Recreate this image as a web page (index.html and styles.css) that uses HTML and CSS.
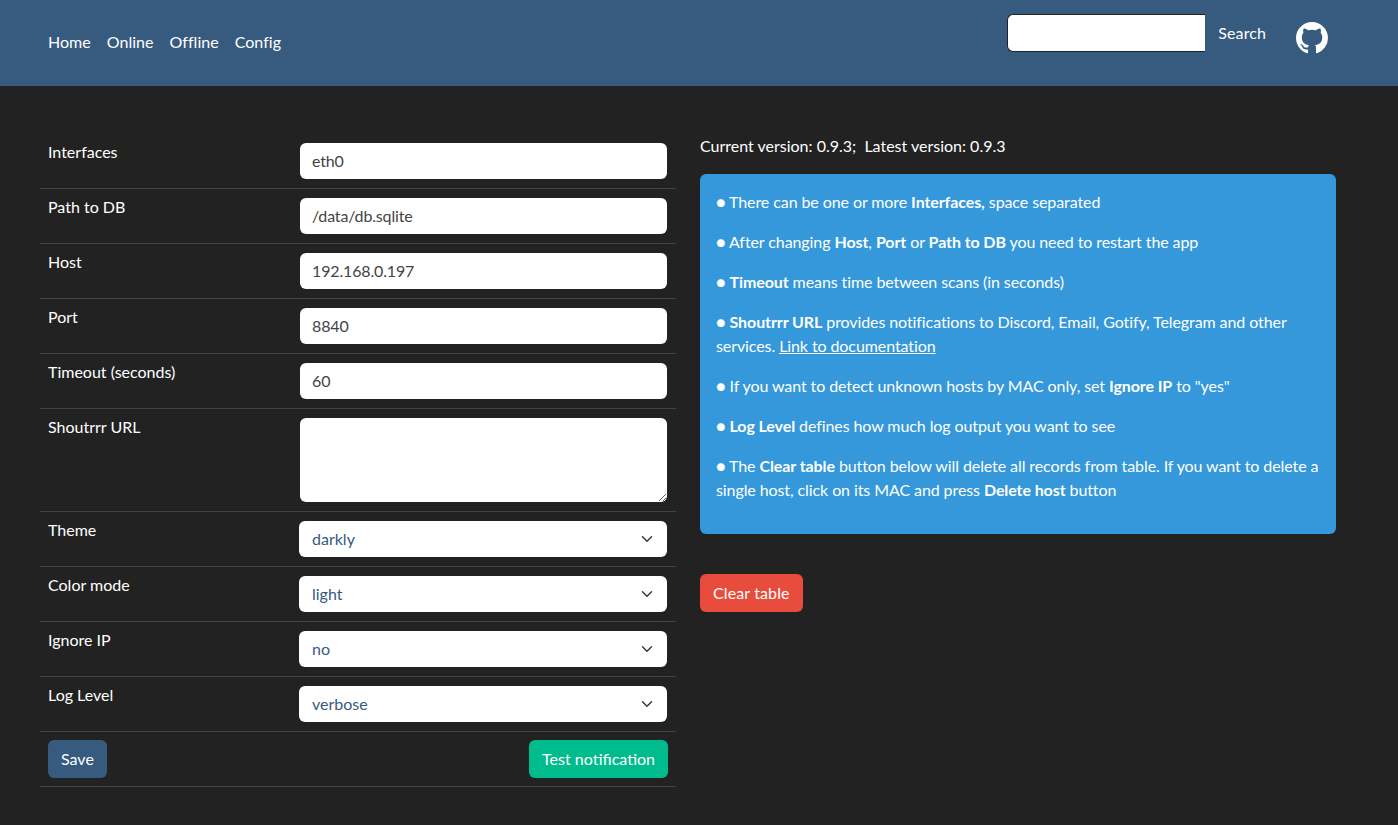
FILE: index.html
```html
<!DOCTYPE html>
<html lang="en">
<head>
<meta charset="utf-8">
<title>WatchYourLAN</title>
<link rel="stylesheet" href="styles.css">
</head>
<body>
<nav class="navbar">
  <ul class="nav-links">
    <li><a href="#">Home</a></li>
    <li><a href="#">Online</a></li>
    <li><a href="#">Offline</a></li>
    <li><a href="#">Config</a></li>
  </ul>
  <form class="search">
    <input class="search-input" type="search">
    <button class="search-btn" type="button">Search</button>
  </form>
  <a class="github" href="#" aria-label="GitHub">
    <svg viewBox="0 0 16 16" width="32" height="32" fill="#fff"><path d="M8 0C3.58 0 0 3.58 0 8c0 3.54 2.29 6.53 5.47 7.59.4.07.55-.17.55-.38 0-.19-.01-.82-.01-1.49-2.01.37-2.53-.49-2.69-.94-.09-.23-.48-.94-.82-1.13-.28-.15-.68-.52-.01-.53.63-.01 1.08.58 1.23.82.72 1.21 1.87.87 2.33.66.07-.52.28-.87.51-1.07-1.78-.2-3.64-.89-3.64-3.95 0-.87.31-1.59.82-2.15-.08-.2-.36-1.02.08-2.12 0 0 .67-.21 2.2.82.64-.18 1.32-.27 2-.27.68 0 1.36.09 2 .27 1.53-1.04 2.2-.82 2.2-.82.44 1.1.16 1.92.08 2.12.51.56.82 1.27.82 2.15 0 3.07-1.87 3.75-3.65 3.95.29.25.54.73.54 1.48 0 1.07-.01 1.93-.01 2.2 0 .21.15.46.55.38A8.013 8.013 0 0016 8c0-4.42-3.58-8-8-8z"/></svg>
  </a>
</nav>
<main class="content">
  <table class="config">
    <tbody>
      <tr><td class="label">Interfaces</td><td><input class="field" type="text" value="eth0"></td></tr>
      <tr><td class="label">Path to DB</td><td><input class="field" type="text" value="/data/db.sqlite"></td></tr>
      <tr><td class="label">Host</td><td><input class="field" type="text" value="192.168.0.197"></td></tr>
      <tr><td class="label">Port</td><td><input class="field" type="text" value="8840"></td></tr>
      <tr><td class="label">Timeout (seconds)</td><td><input class="field" type="text" value="60"></td></tr>
      <tr><td class="label">Shoutrrr URL</td><td><textarea class="field area"></textarea></td></tr>
      <tr><td class="label">Theme</td><td><select class="field select"><option>darkly</option></select></td></tr>
      <tr><td class="label">Color mode</td><td><select class="field select"><option>light</option></select></td></tr>
      <tr><td class="label">Ignore IP</td><td><select class="field select"><option>no</option></select></td></tr>
      <tr><td class="label">Log Level</td><td><select class="field select"><option>verbose</option></select></td></tr>
      <tr>
        <td class="label"><button class="btn btn-primary" type="button">Save</button></td>
        <td class="right"><button class="btn btn-success" type="button">Test notification</button></td>
      </tr>
    </tbody>
  </table>
  <section class="side">
    <p class="version">Current version: 0.9.3;&nbsp; Latest version: 0.9.3</p>
    <div class="alert">
      <p>● There can be one or more <b>Interfaces,</b> space separated</p>
      <p>● After changing <b>Host</b>, <b>Port</b> or <b>Path to DB</b> you need to restart the app</p>
      <p>● <b>Timeout</b> means time between scans (in seconds)</p>
      <p>● <b>Shoutrrr URL</b> provides notifications to Discord, Email, Gotify, Telegram and other services. <a href="#">Link to documentation</a></p>
      <p>● If you want to detect unknown hosts by MAC only, set <b>Ignore IP</b> to "yes"</p>
      <p>● <b>Log Level</b> defines how much log output you want to see</p>
      <p>● The <b>Clear table</b> button below will delete all records from table. If you want to delete a single host, click on its MAC and press <b>Delete host</b> button</p>
    </div>
    <button class="btn btn-danger" type="button">Clear table</button>
  </section>
</main>
</body>
</html>
```

FILE: styles.css
```css
* { box-sizing: border-box; }
html, body { margin: 0; height: 100%; }
body {
  background: #222;
  color: #fff;
  font-family: Lato, "Liberation Sans", sans-serif;
  font-size: 16px;
  line-height: 24px;
}
.navbar {
  display: flex;
  align-items: center;
  height: 86px;
  background: #375a7f;
  padding: 0 70px 0 40px;
}
.nav-links {
  display: flex;
  list-style: none;
  margin: -2px auto 0 0;
  padding: 0;
  letter-spacing: 0.03px;
}
.nav-links a {
  display: block;
  padding: 8px;
  color: #fff;
  text-decoration: none;
}
.search {
  display: flex;
  align-items: center;
  margin-top: -20px;
}
.search-input {
  width: 198px;
  height: 38px;
  background: #fff;
  border: 1px solid #222;
  border-right: 0;
  border-radius: 6px 0 0 6px;
  padding: 6px 12px;
  font: inherit;
}
.search-btn {
  background: transparent;
  border: 0;
  color: #fff;
  font: inherit;
  height: 38px;
  padding: 0 12px 0 13px;
  letter-spacing: 0.1px;
}
.github {
  display: flex;
  margin: -10px 0 0 18px;
}
.content {
  display: grid;
  grid-template-columns: 636px 636px;
  gap: 24px;
  padding: 48px 0 0 40px;
  align-items: start;
}
.config {
  width: 636px;
  border-collapse: collapse;
  table-layout: fixed;
}
.config td {
  padding: 8px;
  border-bottom: 1px solid #444;
  vertical-align: top;
}
.config td:first-child { width: 252px; }
.config td.label { line-height: 19px; }
.config td.right { text-align: right; }
.field {
  display: block;
  width: 367px;
  height: 36px;
  margin: 1px 0;
  background: #fff;
  color: #444;
  border: 0;
  border-radius: 6px;
  padding: 5px 12px 7px;
  font: inherit;
  line-height: 24px;
  letter-spacing: -0.15px;
}
.area { height: 84px; resize: vertical; }
.select {
  width: 368px;
  margin-left: -1px;
  padding: 6px 36px 6px 13px;
  color: #375a7f;
  letter-spacing: 0;
  appearance: none;
  background-image: url("data:image/svg+xml,%3csvg xmlns='http://www.w3.org/2000/svg' viewBox='0 0 16 16'%3e%3cpath fill='none' stroke='%23343a40' stroke-linecap='round' stroke-linejoin='round' stroke-width='2' d='m2 5 6 6 6-6'/%3e%3c/svg%3e");
  background-repeat: no-repeat;
  background-position: right 12px center;
  background-size: 16px 12px;
}
.btn {
  display: inline-block;
  height: 38px;
  padding: 0 13px;
  border: 0;
  border-radius: 6px;
  color: #fff;
  font: inherit;
  line-height: 38px;
}
.btn-primary { background: #375a7f; }
.btn-success { background: #00bc8c; }
.btn-danger { background: #e74c3c; letter-spacing: 0.12px; }
.version { margin: 0 0 16px; }
.alert {
  background: #3498db;
  border-radius: 6px;
  padding: 16px;
  height: 360px;
  margin-bottom: 40px;
  letter-spacing: -0.09px;
}
.alert p { margin: 0 0 16px; }
.alert a { color: #fff; text-decoration: underline; }
```
